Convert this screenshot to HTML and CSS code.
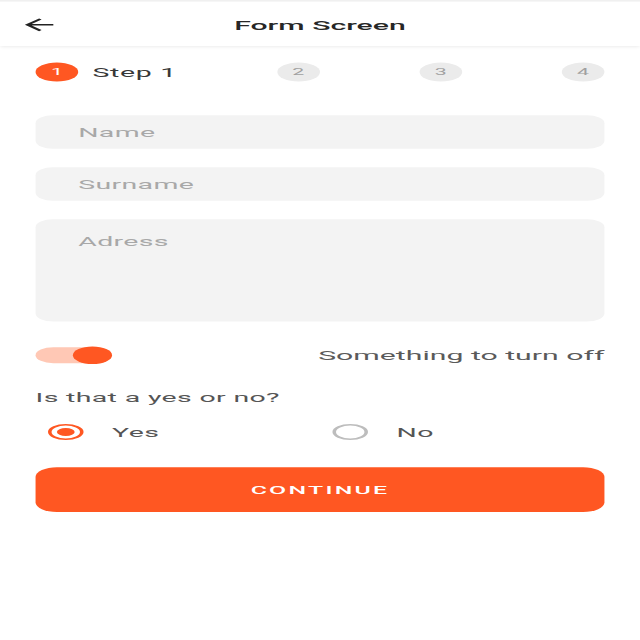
FILE: index.html
```html
<!DOCTYPE html>
<html lang="en">
<head>
<meta charset="utf-8">
<title>Form Screen</title>
<link rel="stylesheet" href="styles.css">
</head>
<body>
<div class="screen">
  <header class="appbar">
    <button class="back" aria-label="Back">
      <svg viewBox="0 0 24 24" width="24" height="24"><path d="M20 11H7.83l5.59-5.59L12 4l-8 8 8 8 1.41-1.41L7.83 13H20v-2z"/></svg>
    </button>
    <h1 class="title">Form Screen</h1>
  </header>
  <main class="content">
    <div class="stepper">
      <div class="step active"><span class="step-num">1</span><span class="step-label">Step 1</span></div>
      <div class="step"><span class="step-num">2</span></div>
      <div class="step"><span class="step-num">3</span></div>
      <div class="step"><span class="step-num">4</span></div>
    </div>
    <div class="fields">
      <div class="field">Name</div>
      <div class="field">Surname</div>
      <div class="field field-area">Adress</div>
    </div>
    <div class="toggle-row">
      <div class="toggle"><span class="thumb"></span></div>
      <span class="toggle-label">Something to turn off</span>
    </div>
    <p class="question">Is that a yes or no?</p>
    <div class="radios">
      <div class="option"><span class="radio checked"><span class="dot"></span></span><span class="option-label">Yes</span></div>
      <div class="option"><span class="radio"></span><span class="option-label">No</span></div>
    </div>
    <button class="continue">CONTINUE</button>
  </main>
</div>
</body>
</html>
```
FILE: styles.css
```css
* { box-sizing: border-box; margin: 0; padding: 0; }
html, body { width: 640px; height: 640px; overflow: hidden; background: #fff; }
body { font-family: Roboto, "Noto Sans", sans-serif; }

.screen {
  width: 360px;
  transform: scale(1.77778, 0.8);
  transform-origin: 0 0;
  background: #fff;
}

.appbar {
  height: 57px;
  display: flex;
  align-items: center;
  border-top: 2px solid #f0f0f0;
  box-shadow: 0 2px 3px rgba(0, 0, 0, 0.1);
  padding-top: 2px;
}
.back {
  width: 24px;
  height: 24px;
  margin-left: 10px;
  border: 0;
  background: none;
  display: flex;
}
.back svg { fill: #222; }
.title {
  flex: 1;
  text-align: center;
  margin-right: 34px;
  font-size: 17px;
  font-weight: 500;
  color: #262626;
}

.content { padding: 21px 20px 0; }

.stepper {
  display: flex;
  justify-content: space-between;
  align-items: center;
  height: 24px;
}
.step { display: flex; align-items: center; gap: 8px; }
.step-num {
  width: 24px;
  height: 24px;
  border-radius: 50%;
  background: #ebebeb;
  color: #a0a0a0;
  font-size: 12px;
  display: flex;
  align-items: center;
  justify-content: center;
}
.step.active .step-num { background: #ff5722; color: #fff; }
.step-label { font-size: 16px; color: #383838; letter-spacing: 0.4px; }

.fields {
  margin-top: 42px;
  display: flex;
  flex-direction: column;
  gap: 23px;
}
.field {
  height: 42px;
  background: #f3f3f3;
  border-radius: 10px;
  padding: 0 24px;
  font-size: 16px;
  letter-spacing: 0.2px;
  color: #a8a8a8;
  display: flex;
  align-items: center;
}
.field-area {
  height: 128px;
  align-items: flex-start;
  padding-top: 18px;
  line-height: 20px;
}

.toggle-row {
  margin-top: 30px;
  height: 24px;
  display: flex;
  align-items: center;
}
.toggle {
  position: relative;
  width: 43px;
  height: 20px;
  border-radius: 10px;
  background: #ffc8b5;
}
.thumb {
  position: absolute;
  right: 0;
  top: -1px;
  width: 22px;
  height: 22px;
  border-radius: 50%;
  background: #ff5722;
}
.toggle-label { margin-left: auto; font-size: 17px; color: #5a5a5a; }

.question {
  margin-top: 31px;
  font-size: 16px;
  line-height: 20px;
  letter-spacing: 0.2px;
  color: #555;
}

.radios { margin-top: 21px; display: flex; height: 24px; }
.option {
  flex: 1;
  display: flex;
  align-items: center;
  padding-left: 7px;
  gap: 16px;
}
.radio {
  width: 20px;
  height: 20px;
  border-radius: 50%;
  border: 2px solid #bdbdbd;
  display: flex;
  align-items: center;
  justify-content: center;
}
.radio.checked { border-color: #ff5722; }
.dot { width: 10px; height: 10px; border-radius: 50%; background: #ff5722; }
.option-label { font-size: 16px; letter-spacing: 0.3px; color: #555; }

.continue {
  margin-top: 32px;
  width: 100%;
  height: 56px;
  border: 0;
  border-radius: 12px;
  background: #ff5722;
  color: #fff;
  font-family: Roboto, "Noto Sans", sans-serif;
  font-size: 14px;
  font-weight: 500;
  letter-spacing: 1.25px;
}
```
